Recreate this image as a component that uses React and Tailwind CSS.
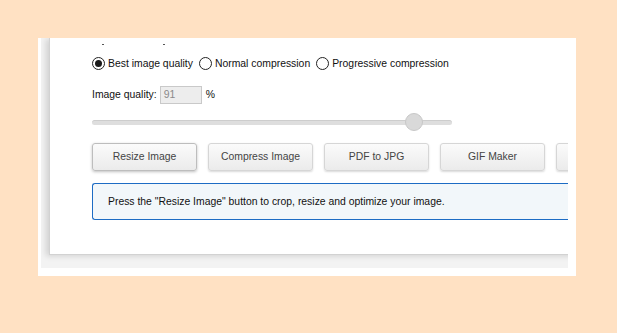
import React, { useState } from "react";

// the fifth button is cut off by the frame, only its left edge shows
const buttons = ["Resize Image", "Compress Image", "PDF to JPG", "GIF Maker", ""];

const modes = ["Best image quality", "Normal compression", "Progressive compression"];

// Old-style radio circle
const Radio = ({ checked }) => (
  <span className="w-[13px] h-[13px] rounded-full border border-[#222] bg-white flex items-center justify-center shrink-0">
    {checked && <span className="w-[7px] h-[7px] rounded-full bg-[#1a1a1a]" />}
  </span>
);

const App = () => {
  const [mode, setMode] = useState(0);
  const [quality] = useState(91);

  return (
    <div
      className="min-h-screen w-full bg-[#ffe1c3] pt-[38px] pl-[38px] text-[10.4px] text-[#111]"
      style={{ fontFamily: '"Liberation Sans", Arial, sans-serif' }}
    >
      <div className="w-[538px] h-[238px] bg-white pl-[3px] pr-[8px] pb-[8px]">
        <div className="h-[230px] overflow-hidden bg-[#f3f3f3]">
          <div className="w-[600px] h-[217px] ml-[8px] bg-white border-l border-b border-[#d2d2d2] shadow-[-3px_1px_6px_rgba(0,0,0,0.14)] pl-[42px]">
            {/* bottoms of the line cut off above */}
            <div className="h-[12px] flex items-start pt-[6px]">
              <span className="w-[2px] h-[1px] bg-[#555] ml-[10px]" />
              <span className="w-[2px] h-[1px] bg-[#555] ml-[59px]" />
            </div>

            <div className="mt-[6px] h-[14px] flex items-center">
              {modes.map((m, i) => (
                <label
                  key={m}
                  onClick={() => setMode(i)}
                  className="flex items-center gap-[3px] mr-[6px] cursor-pointer leading-none"
                >
                  <Radio checked={mode === i} />
                  <span className="pt-[2px]">{m}</span>
                </label>
              ))}
            </div>

            <div className="mt-[16px] h-[18px] flex items-center">
              <span>Image quality:</span>
              <span className="ml-[3px] w-[42px] h-[18px] border border-[#c9c9c9] bg-[#ededed] text-[#8a8a8a] pl-[3px] flex items-center">
                {quality}
              </span>
              <span className="ml-[4px]">%</span>
            </div>

            <div className="mt-[9px] h-[18px] w-[360px] flex items-center relative">
              <div className="w-full h-[5px] rounded-full bg-[#dedede] border-t border-[#cdcdcd]" />
              <span className="absolute left-[313px] top-0 w-[18px] h-[18px] rounded-full bg-[#d9d9d9] border border-[#c8c8c8]" />
            </div>

            <div className="mt-[12px] flex gap-[11px]">
              {buttons.map((b, i) => (
                <button
                  key={i}
                  className={
                    "w-[105px] h-[28px] shrink-0 rounded-[3px] border bg-gradient-to-b from-[#fbfbfb] to-[#ebebeb] text-[#444] text-[10.4px] " +
                    (i === 0
                      ? "border-[#bdbdbd] shadow-[0_1px_3px_rgba(0,0,0,0.25)]"
                      : "border-[#d6d6d6] shadow-[0_1px_2px_rgba(0,0,0,0.15)]")
                  }
                >
                  {b}
                </button>
              ))}
            </div>

            <div className="mt-[12px] w-[520px] h-[37px] border border-r-0 border-[#1d6cc4] rounded-l-[3px] bg-[#f2f7fa] pl-[15px] flex items-center">
              Press the "Resize Image" button to crop, resize and optimize your image.
            </div>
          </div>
        </div>
      </div>
    </div>
  );
};

export default App;
